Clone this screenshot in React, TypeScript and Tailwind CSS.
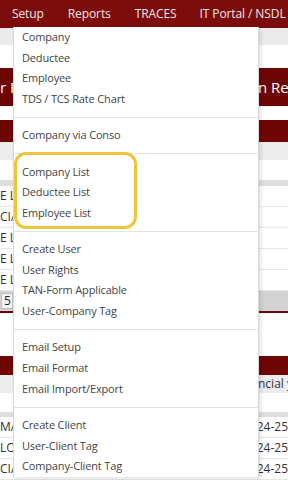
const font = { fontFamily: '"Open Sans", "Noto Sans", Arial, sans-serif' };

const menu: string[][] = [
  ["Company", "Deductee", "Employee", "TDS / TCS Rate Chart"],
  ["Company via Conso"],
  ["Company List", "Deductee List", "Employee List"],
  ["Create User", "User Rights", "TAN-Form Applicable", "User-Company Tag"],
  ["Email Setup", "Email Format", "Email Import/Export"],
  ["Create Client", "User-Client Tag", "Company-Client Tag"],
];

// a table row of the page behind the menu; only the two edges show
function Row({ left, right }: { left: string; right?: string }) {
  return (
    <div className="flex h-[21px] items-center justify-between border-b border-[#e6e6e6] text-[12px] text-[#333]">
      <span className="w-[13px] overflow-hidden whitespace-nowrap">{left}</span>
      <span className="flex w-[30px] justify-end overflow-hidden whitespace-nowrap">{right}</span>
    </div>
  );
}

export default function App() {
  return (
    <div className="relative h-[480px] w-[288px] overflow-hidden bg-white" style={font}>
      {/* top nav */}
      <div className="flex h-[28px] items-center bg-[#7c0b0b] text-[12px] tracking-[-0.1px] text-[#f3e6e6]">
        <span className="ml-[12px]">Setup</span>
        <span className="ml-[24px]">Reports</span>
        <span className="ml-[24px]">TRACES</span>
        <span className="ml-[23px] whitespace-nowrap">IT Portal / NSDL</span>
      </div>

      {/* page behind */}
      <div className="h-[17px] bg-[#ebebeb]" />
      <div className="h-[23px]" />
      <div className="flex h-[38px] items-center justify-between bg-[#6e0606] text-[15px] text-white">
        <span className="w-[13px] overflow-hidden whitespace-nowrap">r F</span>
        <span className="w-[30px] overflow-hidden whitespace-nowrap">n Ret</span>
      </div>
      <div className="h-[14px]" />
      <div className="h-[22px] bg-[#6e0606]" />
      <div className="h-[18px] bg-[#ececec]" />
      <div className="h-[20px]" />
      <div className="h-[6px] bg-[#dedede]" />
      <Row left="E L" />
      <Row left="CIA" />
      <Row left="E L" />
      <Row left="E L" />
      <Row left="E L" />
      <div className="flex h-[20px] items-center bg-[#d3d3d3]">
        <div className="ml-[1px] flex h-[16px] w-[12px] items-center border border-[#bdbdbd] bg-[#f4f4f4] pl-[2px] text-[12px] text-[#222]">
          5
        </div>
      </div>
      <div className="h-[2px] bg-[#6e0606]" />
      <div className="h-[43px]" />
      <div className="h-[19px] bg-[#6e0606]" />
      <div className="flex h-[18px] items-center justify-end bg-[#ececec] text-[12px] text-[#333]">
        <span className="flex w-[30px] overflow-hidden whitespace-nowrap">ncial ye</span>
      </div>
      <div className="h-[19px]" />
      <div className="h-[5px] bg-[#dedede]" />
      <Row left="MA" right="2024-25" />
      <Row left="LOG" right="2024-25" />
      <Row left="CIA" right="2024-25" />

      {/* dropdown */}
      <div className="absolute left-[13px] top-[27px] w-[246px] border-x border-[#d9d9d9] bg-white text-[11px] tracking-[-0.15px] text-[#444] shadow-[2px_2px_4px_rgba(0,0,0,0.12)]">
        {menu.map((group, gi) => (
          <div key={gi}>
            {gi > 0 && (
              <div className="flex h-[15.5px] items-center">
                <div className="h-px w-full bg-[#e3e3e3]" />
              </div>
            )}
            {group.map((item) => (
              <div key={item} className="flex h-[20.7px] items-center pl-[8px]">
                {item}
              </div>
            ))}
          </div>
        ))}
      </div>

      {/* highlight */}
      <div className="absolute left-[14px] top-[152px] h-[77px] w-[123px] rounded-[12px] border-[3px] border-[#eec53c]" />
    </div>
  );
}
